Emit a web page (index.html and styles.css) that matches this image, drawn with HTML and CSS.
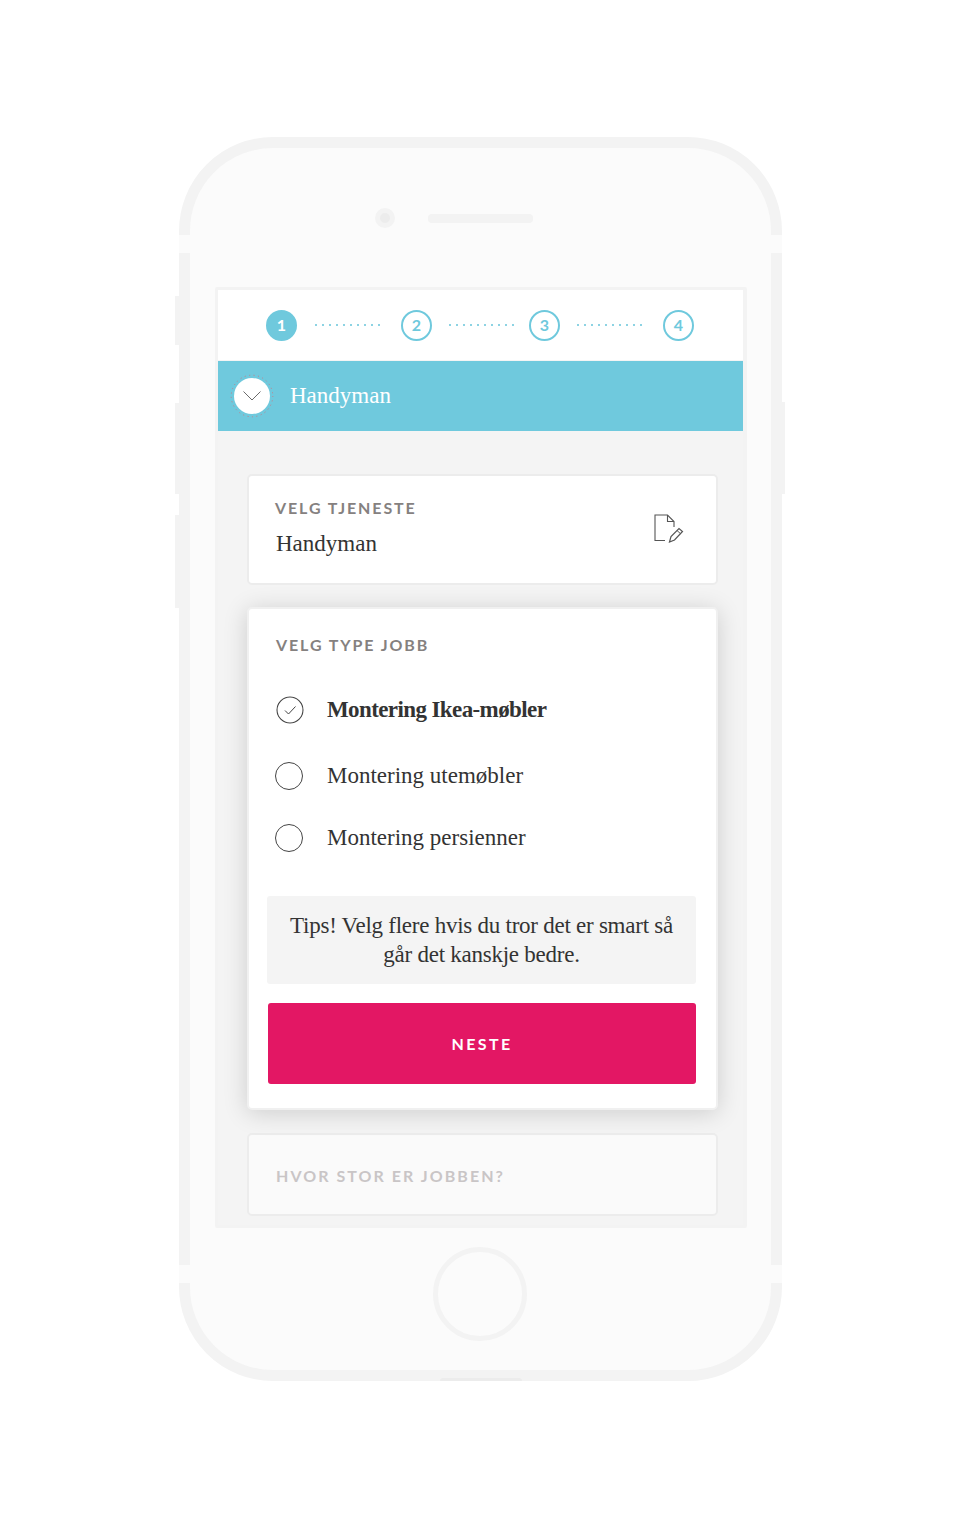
FILE: index.html
```html
<!DOCTYPE html>
<html lang="no">
<head>
    <meta charset="UTF-8">
    <meta name="viewport" content="width=device-width, initial-scale=1.0">
    <title>Velg type jobb</title>
    <link rel="stylesheet" href="styles.css">
</head>
<body>
    <div class="phone">
        <!-- knapper og antennestriper på kanten -->
        <span class="side-btn left-1"></span>
        <span class="side-btn left-2"></span>
        <span class="side-btn left-3"></span>
        <span class="side-btn right-1"></span>
        <span class="band band-tl"></span>
        <span class="band band-tr"></span>
        <span class="band band-bl"></span>
        <span class="band band-br"></span>
        <span class="bottom-bump"></span>

        <div class="phone-top">
            <span class="camera"></span>
            <span class="speaker"></span>
        </div>

        <div class="screen">
            <div class="stepper">
                <span class="step active">1</span>
                <span class="step-line"></span>
                <span class="step">2</span>
                <span class="step-line"></span>
                <span class="step">3</span>
                <span class="step-line"></span>
                <span class="step">4</span>
            </div>

            <div class="service-bar">
                <span class="bar-toggle">
                    <svg width="44" height="44" viewBox="0 0 44 44">
                        <circle cx="22" cy="22" r="20.8" fill="none" stroke="#c97c86" stroke-width="1" stroke-dasharray="1 3.5"/>
                        <circle cx="22" cy="22" r="18" fill="#fff"/>
                        <path d="M13.5 17.5 L22 26 L30.5 17.5" fill="none" stroke="#6b6b6b" stroke-width="1"/>
                    </svg>
                </span>
                <span class="bar-title">Handyman</span>
            </div>

            <div class="stage">
                <div class="card card-service">
                    <div>
                        <div class="label">VELG TJENESTE</div>
                        <div class="service-name">Handyman</div>
                    </div>
                    <svg class="edit-icon" width="30" height="30" viewBox="0 0 30 30">
                        <path d="M11 26.5H1V1H13.5L20 7.5V13" fill="none" stroke="#555" stroke-width="1.1"/>
                        <path d="M13.5 1V7.5H20" fill="none" stroke="#555" stroke-width="1.1"/>
                        <path d="M15.5 28L17 22.5L25 14.5L28.5 17.5L20.5 26Z" fill="none" stroke="#555" stroke-width="1.2"/>
                        <path d="M23 16.5L26.5 19.7" fill="none" stroke="#555" stroke-width="1"/>
                    </svg>
                </div>

                <div class="card card-type">
                    <div class="label">VELG TYPE JOBB</div>
                    <ul class="options">
                        <li class="option selected">
                            <svg class="radio" width="28" height="28" viewBox="0 0 28 28">
                                <circle cx="14" cy="14" r="13" fill="none" stroke="#444" stroke-width="1.1"/>
                                <path d="M9 14.5L12.5 18L19.5 10.5" fill="none" stroke="#444" stroke-width="1"/>
                            </svg>
                            Montering Ikea-møbler
                        </li>
                        <li class="option">
                            <span class="radio"></span>
                            Montering utemøbler
                        </li>
                        <li class="option">
                            <span class="radio"></span>
                            Montering persienner
                        </li>
                    </ul>
                    <div class="tips">Tips! Velg flere hvis du tror det er smart så går det kanskje bedre.</div>
                    <button class="next-btn">NESTE</button>
                </div>

                <div class="card card-size">
                    <div class="label">HVOR STOR ER JOBBEN?</div>
                </div>
            </div>
        </div>

        <div class="home-btn"></div>
    </div>
</body>
</html>
```

FILE: styles.css
```css
body {
    margin: 0;
    height: 1518px;
    overflow: hidden;
    background-color: #fff;
    font-family: "Liberation Serif", serif;
    color: #333;
}

.phone {
    position: relative;
    box-sizing: border-box;
    width: 603px;
    height: 1244px;
    margin: 137px 0 0 179px;
    border: 11px solid #f3f3f3;
    border-radius: 94px;
    background-color: #fbfbfb;
}

.side-btn {
    position: absolute;
    width: 4px;
    background-color: #f3f3f3;
}

.left-1 { left: -15px; top: 148px; height: 49px; }
.left-2 { left: -15px; top: 255px; height: 91px; }
.left-3 { left: -15px; top: 367px; height: 93px; }
.right-1 { right: -14px; top: 254px; height: 92px; width: 3px; }

.band {
    position: absolute;
    width: 11px;
    height: 18px;
    background-color: #fbfbfb;
}

.band-tl { left: -11px; top: 87px; }
.band-tr { right: -11px; top: 87px; }
.band-bl { left: -11px; top: 1117px; }
.band-br { right: -11px; top: 1117px; }

.bottom-bump {
    position: absolute;
    left: 250px;
    bottom: -11px;
    width: 82px;
    height: 3px;
    border-radius: 3px 3px 0 0;
    background-color: #ececec;
}

.phone-top {
    display: flex;
    align-items: center;
    height: 139px;
    padding: 1px 0 0 185px;
    box-sizing: border-box;
}

.camera {
    box-sizing: border-box;
    width: 20px;
    height: 20px;
    border: 5px solid #f3f3f3;
    border-radius: 50%;
    background-color: #ececec;
}

.speaker {
    width: 105px;
    height: 9px;
    margin-left: 33px;
    border-radius: 4px;
    background-color: #f3f3f3;
}

.screen {
    box-sizing: border-box;
    width: 532px;
    height: 941px;
    margin-left: 25px;
    border: 3px solid #f3f3f3;
    border-right-width: 4px;
    border-radius: 2px;
    background-color: #f4f4f4;
}

.stepper {
    display: flex;
    align-items: center;
    box-sizing: border-box;
    height: 70px;
    padding-left: 48px;
    background-color: #fff;
}

.step {
    box-sizing: border-box;
    width: 31px;
    height: 31px;
    border: 2px solid #6fc9dd;
    border-radius: 50%;
    font-family: Lato, sans-serif;
    font-size: 16px;
    font-weight: 700;
    line-height: 25px;
    text-align: center;
    color: #6fc9dd;
}

.step.active {
    background-color: #6fc9dd;
    color: #fff;
}

.step-line {
    width: 67px;
    height: 2px;
    margin: 0 19px 0 18px;
    background-image: repeating-linear-gradient(90deg, #8dd3e3 0, #8dd3e3 2px, transparent 2px, transparent 7px);
}

.step-line:nth-child(4) {
    margin-left: 17px;
    margin-right: 13px;
}

.step-line:nth-child(6) {
    margin-left: 17px;
}

.service-bar {
    display: flex;
    align-items: center;
    height: 70px;
    margin-top: 1px;
    padding-left: 12px;
    background-color: #6fc9dd;
}

.bar-toggle {
    display: flex;
    width: 44px;
    height: 44px;
}

.bar-title {
    margin-left: 16px;
    font-size: 23px;
    color: #fff;
}

.stage {
    padding: 43px 0 0 29px;
}

.card {
    box-sizing: border-box;
    width: 471px;
    border: 2px solid #ececec;
    border-radius: 5px;
    background-color: #fff;
}

.label {
    font-family: Lato, sans-serif;
    font-size: 16px;
    font-weight: 700;
    letter-spacing: 1.9px;
    color: #85817f;
}

.card-service {
    display: flex;
    justify-content: space-between;
    height: 111px;
    padding: 22px 32px 0 26px;
}

.service-name {
    margin: 14px 0 0 1px;
    font-size: 23px;
}

.edit-icon {
    margin-top: 16px;
}

.card-type {
    position: relative;
    height: 503px;
    margin-top: 22px;
    padding: 26px 20px 0 18px;
    border-color: #f0f0f0;
    box-shadow: 0 3px 24px rgba(0, 0, 0, 0.16);
}

.card-type .label {
    margin-left: 9px;
}

.options {
    list-style: none;
    margin: 21px 0 0 0;
    padding: 0 0 0 8px;
}

.option {
    display: flex;
    align-items: center;
    gap: 24px;
    height: 62px;
    font-size: 23px;
}

.option.selected {
    height: 70px;
    margin-left: 1px;
    font-weight: 700;
    letter-spacing: -0.6px;
}

.radio {
    box-sizing: border-box;
    width: 28px;
    height: 28px;
    border: 1.3px solid #444;
    border-radius: 50%;
}

svg.radio {
    border: 0;
    margin-right: -1px;
}

.tips {
    box-sizing: border-box;
    height: 88px;
    margin-top: 27px;
    padding: 15px 15px 0;
    border-radius: 3px;
    background-color: #f4f4f4;
    font-size: 23px;
    letter-spacing: -0.25px;
    line-height: 29px;
    text-align: center;
}

.next-btn {
    display: block;
    width: 428px;
    height: 81px;
    margin: 19px 0 0 1px;
    border: 0;
    border-radius: 3px;
    background-color: #e31764;
    font-family: Lato, sans-serif;
    font-size: 16px;
    font-weight: 700;
    letter-spacing: 2.4px;
    color: #fff;
}

.card-size {
    height: 83px;
    margin-top: 23px;
    padding: 31px 0 0 27px;
    background-color: #fafafa;
}

.card-size .label {
    letter-spacing: 2.05px;
    color: #c9c5c6;
}

.home-btn {
    box-sizing: border-box;
    width: 94px;
    height: 94px;
    margin: 19px 0 0 243px;
    border: 5px solid #f3f3f3;
    border-radius: 50%;
}
```
